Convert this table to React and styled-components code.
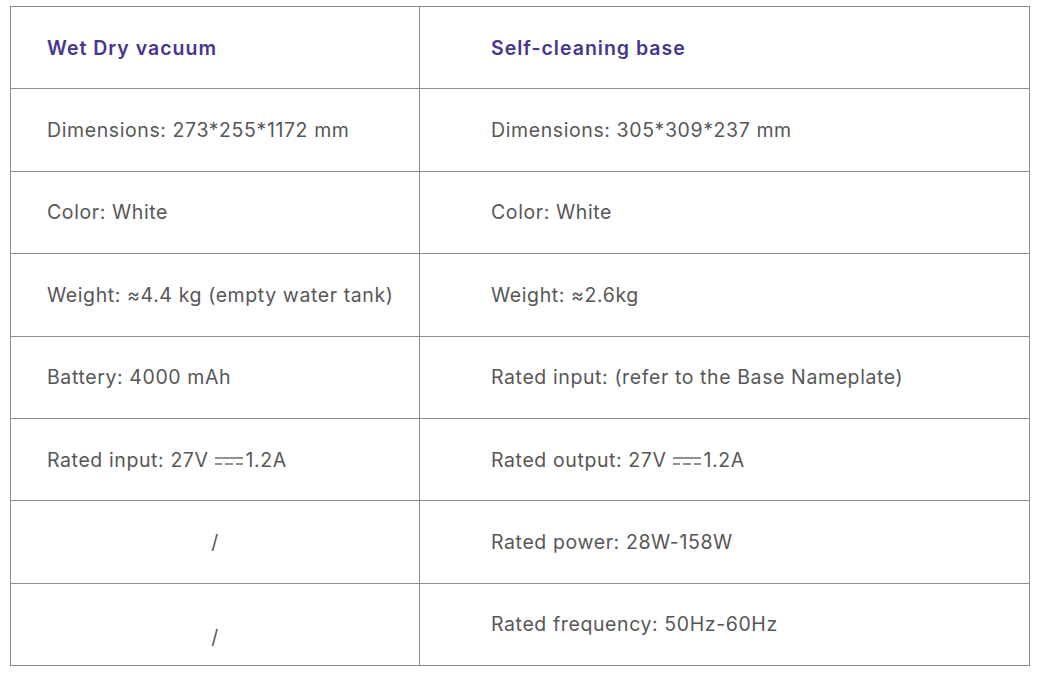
import React from "react";
import styled, { createGlobalStyle } from "styled-components";

const Global = createGlobalStyle`
  html, body {
    margin: 0;
    background: #ffffff;
  }
  body {
    font-family: Inter, "Noto Sans", "Liberation Sans", sans-serif;
  }
`;

const Page = styled.div`
  padding: 6px 0 0 10px;
`;

const Table = styled.table`
  width: 1019px;
  border-collapse: collapse;
  table-layout: fixed;
  border: 1.5px solid #8c8c8c;
`;

const Col = styled.col`
  width: ${(p) => p.$w}px;
`;

const Row = styled.tr`
  height: 82.4px;
`;

const Cell = styled.td`
  border: 1.5px solid #8c8c8c;
  padding: ${(p) => (p.$shift ? "26px" : "0")} 0 0
    ${(p) => (p.$right ? "71px" : "36px")};
  text-align: ${(p) => (p.$center ? "center" : "left")};
  ${(p) => p.$center && "padding-left: 0;"}
  vertical-align: middle;
  font-size: 19.5px;
  letter-spacing: ${(p) => (p.$head ? "1px" : "0.6px")};
  color: ${(p) => (p.$head ? "#46368f" : "#575757")};
  font-weight: ${(p) => (p.$head ? 600 : 400)};
  white-space: nowrap;
`;

const Dc = () => (
  <svg
    width="30"
    height="10"
    viewBox="0 0 30 10"
    style={{ margin: "0 2px 0 5px", verticalAlign: "1px" }}
  >
    <line x1="1" y1="2" x2="29" y2="2" stroke="#575757" strokeWidth="1.3" />
    <line x1="1" y1="8" x2="8" y2="8" stroke="#575757" strokeWidth="1.3" />
    <line x1="11" y1="8" x2="19" y2="8" stroke="#575757" strokeWidth="1.3" />
    <line x1="22" y1="8" x2="29" y2="8" stroke="#575757" strokeWidth="1.3" />
  </svg>
);

const rows = [
  ["Dimensions: 273*255*1172 mm", "Dimensions: 305*309*237 mm"],
  ["Color: White", "Color: White"],
  ["Weight: ≈4.4 kg (empty water tank)", "Weight: ≈2.6kg"],
  ["Battery: 4000 mAh", "Rated input: (refer to the Base Nameplate)"],
  [
    <>
      Rated input: 27V
      <Dc />
      1.2A
    </>,
    <>
      Rated output: 27V
      <Dc />
      1.2A
    </>,
  ],
  [null, "Rated power: 28W-158W"],
  [null, "Rated frequency: 50Hz-60Hz"],
];

export default function App() {
  return (
    <>
      <Global />
      <Page>
        <Table>
          <colgroup>
            <Col $w={409} />
            <Col $w={610} />
          </colgroup>
          <tbody>
            <Row>
              <Cell $head>Wet Dry vacuum</Cell>
              <Cell $head $right>
                Self-cleaning base
              </Cell>
            </Row>
            {rows.map(([left, right], i) => (
              <Row key={i}>
                {left === null ? (
                  <Cell $center $shift={i === rows.length - 1}>
                    /
                  </Cell>
                ) : (
                  <Cell>{left}</Cell>
                )}
                <Cell $right>{right}</Cell>
              </Row>
            ))}
          </tbody>
        </Table>
      </Page>
    </>
  );
}
